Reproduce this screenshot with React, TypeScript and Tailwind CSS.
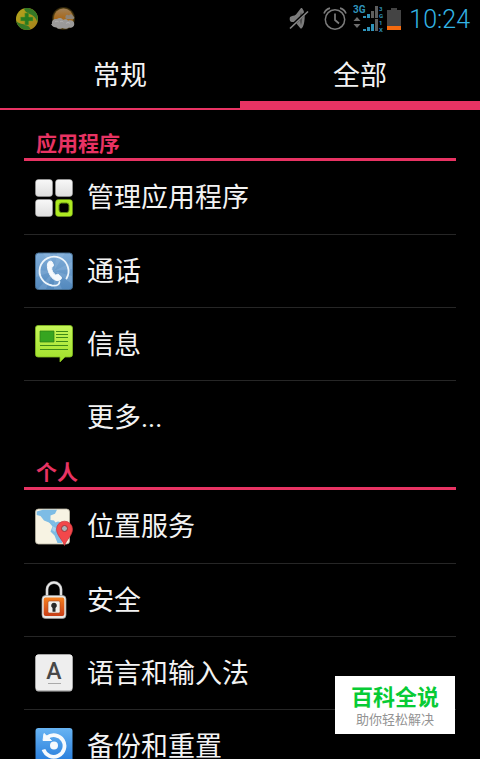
import { useState } from 'react';
import type { ReactNode } from 'react';
import { clsx } from 'clsx';

/* ---------- Status bar icons ---------- */

function ShieldIcon() {
  return (
    <svg viewBox="0 0 24 24" className="size-6" aria-hidden="true">
      <defs>
        <linearGradient id="guard" x1="0" y1="0" x2="1" y2="1">
          <stop offset="0" stopColor="#b3a71c" />
          <stop offset="1" stopColor="#a5801a" />
        </linearGradient>
      </defs>
      <circle cx="12" cy="12" r="11" fill="url(#guard)" />
      <path d="M9 1.500C14 0 19 2.500 21.500 6.500 23 9.500 23 12.500 22.300 15 21 10.500 18 8 14.500 7 11.500 5.800 9.500 4 9 1.500Z" fill="#347826" />
      <path d="M1.200 14C4 17 8 16.800 11 18 13.500 19 15 20.500 15.500 22.300 9 24.500 3 21 1.200 14Z" fill="#347826" />
      <path d="M9.800 6h4v4H18v4h-4.200v4h-4v-4H5.600v-4h4.200Z" fill="#277a20" stroke="#7d9a20" strokeWidth=".5" />
    </svg>
  );
}

function WeatherIcon() {
  return (
    <svg viewBox="0 0 26 24" className="h-6 w-[26px]" aria-hidden="true">
      <defs>
        <radialGradient id="glow">
          <stop offset=".75" stopColor="#8a6a20" />
          <stop offset="1" stopColor="#8a6a20" stopOpacity="0" />
        </radialGradient>
        <linearGradient id="sun" x1="0" y1="0" x2="0" y2="1">
          <stop offset="0" stopColor="#a08058" />
          <stop offset=".5" stopColor="#a8691c" />
          <stop offset="1" stopColor="#9c7434" />
        </linearGradient>
      </defs>
      <circle cx="12.500" cy="11.500" r="12" fill="url(#glow)" />
      <circle cx="12.500" cy="11" r="9.500" fill="url(#sun)" />
      <path d="M1 17C.5 13 3 11.500 6 12c2-1.500 5-1.200 6 1 1.500-1 4-1 5 .8 3-1.300 6.500.2 6.300 3.500-.2 3-3 4-5.300 3.200-2 1.700-5 1.500-6.500.5-3 1.500-5 .8-6-.5-2.500 0-4-.8-5.500-3.500Z" fill="#9b9a99" />
      <path d="M14.500 9.500c0-2 2.500-2.500 3.500-1 1-2 4-1.200 3.800.7 2 0 2 2.800 0 2.800H16c-1.500 0-2-1.500-1.500-2.500Z" fill="#8d8478" />
      <path d="M4 15c1-1 2.500-1 3.500-.2M9 15c1-1 2.500-.8 3.300.2M15 16.500c1-1.200 3-1.200 4 0" stroke="#b5b4b4" fill="none" />
    </svg>
  );
}

function MuteIcon() {
  return (
    <svg viewBox="0 0 20 22" className="h-[22px] w-5" aria-hidden="true">
      <path d="M1 9c2-1.500 4-.8 6-2.500L12 0h1c2.500 3 3 7 2.600 11-.3 4-1.300 8-3 9.500h-1.100L7 15c-2-1.300-4-.5-5.500-1.500C.5 12 .5 10.500 1 9Z" fill="#7c7c7c" />
      <path d="M12 3.500c1.600 4 1.500 10 0 14-1.500-4-1.500-10 0-14Z" fill="#4f4f4f" />
      <path d="M1 19.500 18 3.500" stroke="#000" strokeWidth="3" />
      <path d="M1 20.500 19 3.500" stroke="#858585" strokeWidth="1.700" />
    </svg>
  );
}

function AlarmIcon() {
  return (
    <svg viewBox="0 0 24 24" className="size-6" fill="none" stroke="#7b7b7b" aria-hidden="true">
      <circle cx="12" cy="12.500" r="9.700" strokeWidth="1.500" />
      <path d="M12 6.500v6.500l4 3.500" strokeWidth="1.700" />
      <path d="M1 6.500C2 4 4.500 1.800 7 1.200M23 6.500c-1-2.500-3.500-4.700-6-5.300" strokeWidth="1.700" />
    </svg>
  );
}

function SignalIcon() {
  return (
    <svg viewBox="0 0 34 28" className="h-7 w-[34px] font-['Roboto','Liberation_Sans',sans-serif] font-bold" aria-label="3G 1X">
      <text x="0" y="8" fontSize="10" fill="#2f93ba">3G</text>
      <path d="M10 11h3v2h-3zM14 9h3v4h-3zM10 24h3v2h-3zM14 22h3v4h-3zM18 19h3v7h-3z" fill="#2f93ba" />
      <path d="M18 6h3v7h-3zM22 1h3v12h-3zM22 14h3v12h-3z" fill="#5e5e5e" />
      <path d="M.5 16 4 12l3.500 4ZM.5 19 4 23l3.500-4Z" fill="#6c6c6c" />
      <g fontSize="6" fill="#2f93ba">
        <text x="26" y="6">3</text>
        <text x="26" y="13">G</text>
        <text x="26" y="20">1</text>
        <text x="26" y="27">X</text>
      </g>
    </svg>
  );
}

function BatteryIcon() {
  return (
    <svg viewBox="0 0 14 22" className="h-[22px] w-3.5" aria-hidden="true">
      <path d="M4 0h6v2h4v16H0V2h4Z" fill="#444" />
      <path d="M0 18h14v4H0Z" fill="#f46a0e" />
    </svg>
  );
}

/* ---------- Settings icons, all on a 40px grid ---------- */

function IconFrame({ children }: { children?: ReactNode }) {
  return (
    <svg viewBox="0 0 40 40" className="size-10 shrink-0" aria-hidden="true">
      {children}
    </svg>
  );
}

function AppsIcon() {
  return (
    <IconFrame>
      <defs>
        <linearGradient id="tile" x1="0" y1="0" x2="0" y2="1">
          <stop offset="0" stopColor="#f8f8f8" />
          <stop offset="1" stopColor="#dedede" />
        </linearGradient>
      </defs>
      <g fill="url(#tile)" stroke="#aaa" strokeWidth=".5">
        <rect x="1.500" y="1.500" width="17" height="17" rx="3" />
        <rect x="21.500" y="1.500" width="17" height="17" rx="3" />
        <rect x="1.500" y="21.500" width="17" height="17" rx="3" />
      </g>
      <rect x="21.500" y="21.500" width="17" height="17" rx="3" fill="#aeea22" stroke="#6e9d18" strokeWidth=".5" />
      <rect x="25" y="25" width="10" height="9.500" rx="2.500" fill="#000" stroke="#668f14" />
    </IconFrame>
  );
}

function CallIcon() {
  return (
    <IconFrame>
      <defs>
        <linearGradient id="call" x1="0" y1="0" x2="0" y2="1">
          <stop offset="0" stopColor="#80add8" />
          <stop offset="1" stopColor="#5288bd" />
        </linearGradient>
      </defs>
      <rect x="1.500" y="2" width="37" height="36.500" rx="3" fill="url(#call)" stroke="#456d91" />
      <path d="M20 20 9 2h7ZM20 20l3-18h8ZM20 20l18-9v7ZM20 20l18 5v8ZM20 20l8 18h-8ZM20 20 4 38h8ZM20 20 2 26v-7Z" fill="#a9caea" opacity=".22" />
      <path d="M32.500 27.500A14.500 14.500 0 1 0 18 34.500c3.500.4 7 .5 7.500-3.500" fill="none" stroke="#edf5fb" strokeWidth="1.800" strokeLinecap="round" />
      <path d="M14 11.500c1.300-1.400 2.800-1.800 4-.8l1.500 3.200c.3 1.200-.8 1.700-1.800 2.500-.3 3 1.500 6 4 7.700 1.200-.6 2.200-1.200 3.200-.4l2.300 2.300c.8 1.200-.2 2.600-1.700 3.300-3.200 1.300-7.300-1.300-9.500-5.300-2.300-4.200-3.400-9.800-2-12.500Z" fill="#f5f9fd" stroke="#f5f9fd" />
    </IconFrame>
  );
}

function MessageIcon() {
  return (
    <IconFrame>
      <defs>
        <linearGradient id="sms" x1="0" y1="0" x2="0" y2="1">
          <stop offset="0" stopColor="#c5f659" />
          <stop offset="1" stopColor="#a0e02a" />
        </linearGradient>
      </defs>
      <path d="M4 1.500h32a2.500 2.500 0 0 1 2.500 2.500v26.500a2.500 2.500 0 0 1-2.500 2.500h-5l-5 5v-5H4a2.500 2.500 0 0 1-2.500-2.500V4A2.500 2.500 0 0 1 4 1.500Z" fill="url(#sms)" stroke="#83bd20" strokeWidth=".8" />
      <path d="M6 7h14v11H6Z" fill="#36a520" stroke="#2b7e16" strokeWidth=".7" />
      <path d="M22 7.500h12M22 10.500h12M22 13.500h12M22 17.500h12M6 21.500h28M6 25.500h28" stroke="#3d8a17" strokeWidth="1.200" />
    </IconFrame>
  );
}

function LocationIcon() {
  return (
    <IconFrame>
      <rect x="1.500" y="2" width="34" height="35" rx="3" fill="#f7f3e3" stroke="#bbb6a5" strokeWidth=".8" />
      <path d="M2.700 4.500 9 2.800h14l-2 4-4.500 1.700v4.500l3.500.5 2 2.800-4 .7-3-1.500-5-2-3.500-4.500-3.800-1Z" fill="#7dbce5" />
      <path d="M14 14l5 2.500 5-2 4 1v20.500h-4.500l-3-7.500-4-4 2-5Z" fill="#7dbce5" />
      <path d="M19 19.500l3 1.500-1 4-3-2Z" fill="#a9d3ee" />
      <path d="M30.500 38.500c-1.500-5-8-10.300-8-16.300a8 8 0 0 1 16 0c0 6-6.500 11.300-8 16.300Z" fill="#f3484b" stroke="#c9343b" strokeWidth=".7" />
      <circle cx="30.500" cy="21.500" r="3" fill="#a9b4ba" stroke="#a33237" />
    </IconFrame>
  );
}

function LockIcon() {
  return (
    <IconFrame>
      <defs>
        <linearGradient id="lock" x1="0" y1="0" x2="0" y2="1">
          <stop offset="0" stopColor="#f5801f" />
          <stop offset="1" stopColor="#c93d17" />
        </linearGradient>
      </defs>
      <path d="M13 16.500V9.500a7 7 0 0 1 14 0v7" fill="none" stroke="#8e8e8e" strokeWidth="3" />
      <path d="M13 16.500V9.500a7 7 0 0 1 14 0v7" fill="none" stroke="#e8e8e8" strokeWidth="1.800" />
      <rect x="8" y="15.500" width="24" height="23" rx="3.500" fill="#e8e8e6" stroke="#9b9b9b" strokeWidth=".7" />
      <rect x="9.700" y="17.500" width="20.600" height="18.500" rx="2" fill="url(#lock)" />
      <rect x="14" y="21" width="12" height="12" rx="1.500" fill="#f2f0ec" stroke="#a94a22" strokeWidth=".6" />
      <path d="M20 22.700a2.800 2.800 0 0 1 1.500 5.200v3.800h-3v-3.800a2.800 2.800 0 0 1 1.500-5.200Z" fill="#292929" />
    </IconFrame>
  );
}

function LanguageIcon() {
  return (
    <IconFrame>
      <rect x="1.500" y="1.500" width="37" height="37" rx="3" fill="#bcbcbc" />
      <rect x="1.500" y="1.500" width="37" height="35.500" rx="3" fill="#eee" />
      <text x="20" y="26" textAnchor="middle" fontSize="23" fill="#484848" className="font-['Roboto','Liberation_Sans',sans-serif] font-medium">A</text>
      <path d="M14 30.500h13" stroke="#aaa" />
    </IconFrame>
  );
}

function BackupIcon() {
  return (
    <IconFrame>
      <defs>
        <linearGradient id="backup" x1="0" y1="0" x2="0" y2="1">
          <stop offset="0" stopColor="#68b4f3" />
          <stop offset="1" stopColor="#2177d9" />
        </linearGradient>
      </defs>
      <rect x="1.500" y="2" width="37" height="37" rx="3" fill="url(#backup)" />
      <path d="M13 11.500A10.800 10.800 0 1 1 9.500 23.500" fill="none" stroke="#f7fafd" strokeWidth="3.800" />
      <path d="M10 7.500 17.500 14.500 9 14.500Z" fill="#f7fafd" stroke="#f7fafd" strokeWidth="1" />
      <circle cx="20" cy="19.500" r="4" fill="#f7fafd" />
    </IconFrame>
  );
}

const tabs = ['常规', '全部'];

const sections = [
  {
    title: '应用程序',
    items: [
      { label: '管理应用程序', icon: AppsIcon },
      { label: '通话', icon: CallIcon },
      { label: '信息', icon: MessageIcon },
      { label: '更多...', icon: IconFrame },
    ],
  },
  {
    title: '个人',
    items: [
      { label: '位置服务', icon: LocationIcon },
      { label: '安全', icon: LockIcon },
      { label: '语言和输入法', icon: LanguageIcon },
      { label: '备份和重置', icon: BackupIcon },
    ],
  },
];

function StatusBar() {
  return (
    <header className="flex h-[38px] shrink-0 items-center justify-between pr-2.5 pl-[15px]">
      <div className="flex items-center gap-3">
        <ShieldIcon />
        <WeatherIcon />
      </div>
      <div className="flex items-center">
        <div className="mr-1.5 flex items-center gap-3.5">
          <MuteIcon />
          <AlarmIcon />
        </div>
        <SignalIcon />
        <BatteryIcon />
        <time className="ml-2 pt-0.5 font-['Roboto','Liberation_Sans',sans-serif] text-[25px] leading-8 font-light text-[#33b5e5]">
          10:24
        </time>
      </div>
    </header>
  );
}

export default function App() {
  const [active, setActive] = useState('全部');

  return (
    <div className="flex h-screen flex-col overflow-hidden bg-black font-['Roboto','Noto_Sans_CJK_SC',sans-serif] text-[#f3f3f3]">
      <StatusBar />

      <div role="tablist" className="grid h-[72px] shrink-0 grid-cols-2">
        {tabs.map((tab) => (
          <button
            key={tab}
            type="button"
            role="tab"
            aria-selected={active === tab}
            onClick={() => setActive(tab)}
            className={clsx(
              'border-[#e83363] text-[27px] leading-10',
              active === tab ? 'border-b-9 pt-3' : 'border-b-2 pt-[5px]',
            )}
          >
            {tab}
          </button>
        ))}
      </div>

      <main className="min-h-0 flex-1 overflow-hidden px-6 pt-3.5">
        {sections.map((section) => (
          <section key={section.title}>
            <h2 className="h-[37px] border-b-3 border-[#e83363] pl-3 text-[21px] leading-10 font-bold text-[#e83363]">
              {section.title}
            </h2>
            <ul className="divide-y divide-[#262626]">
              {section.items.map(({ label, icon: Icon }, i) => (
                <li key={label} className={clsx('flex', i === 0 ? 'h-[74px]' : i === 3 ? 'h-[72px]' : 'h-[73px]')}>
                  <button type="button" className="flex flex-1 items-center gap-[13px] pl-2.5 text-left text-[27px] leading-9">
                    <Icon />
                    <span className="pt-px">{label}</span>
                  </button>
                </li>
              ))}
            </ul>
          </section>
        ))}
      </main>

      <aside className="fixed right-[25px] bottom-[25px] flex h-[58px] w-[120px] flex-col items-center justify-center bg-white pt-1.5">
        <strong className="text-[22px] leading-6 font-bold text-[#07cb35]">百科全说</strong>
        <span className="text-[13px] leading-5 text-[#939393]">助你轻松解决</span>
      </aside>
    </div>
  );
}
